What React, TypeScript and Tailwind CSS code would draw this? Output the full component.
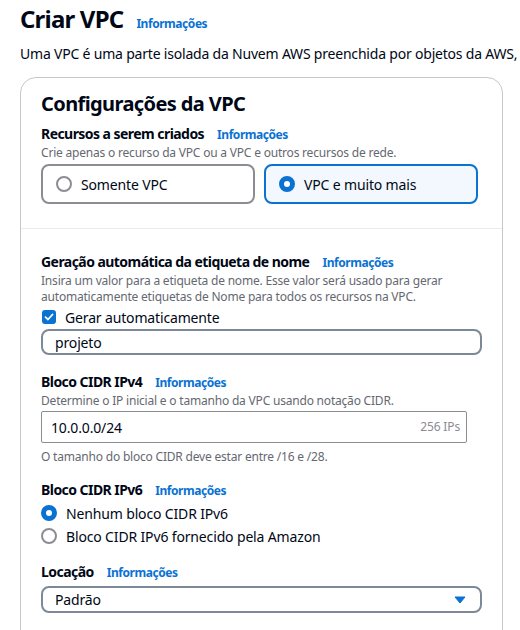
import React from "react";

function Info({ className = "" }: { className?: string }) {
  return (
    <span className={`ml-[13px] text-[12px] font-bold tracking-[-0.45px] text-[#0972d3] ${className}`}>
      Informações
    </span>
  );
}

function Radio({ checked }: { checked: boolean }) {
  return checked ? (
    <span className="w-[16px] h-[16px] rounded-full border-[5px] border-[#0972d3] bg-white shrink-0" />
  ) : (
    <span className="w-[16px] h-[16px] rounded-full border-2 border-[#8c8c94] bg-white shrink-0" />
  );
}

function Label({ text }: { text: string }) {
  return (
    <div className="flex items-baseline leading-[20px]">
      <span className="text-[14px] font-bold tracking-[-0.55px]">{text}</span>
      <Info />
    </div>
  );
}

function Hint({ children, className = "" }: { children: React.ReactNode; className?: string }) {
  return <p className={`text-[12px] tracking-[-0.2px] text-[#656871] leading-[16px] ${className}`}>{children}</p>;
}

export default function App() {
  return (
    <div className="w-[520px] h-[630px] overflow-hidden bg-white text-[#000716] text-[14px] tracking-[-0.15px] font-['Noto_Sans',sans-serif]">
      <div className="px-5 pt-[1px] flex items-baseline">
        <h1 className="text-[24px] font-bold leading-[36px] tracking-[-0.8px]">Criar VPC</h1>
        <Info />
      </div>
      <p className="px-5 mt-[7px] leading-[20px] whitespace-nowrap overflow-hidden tracking-[-0.2px]">
        Uma VPC é uma parte isolada da Nuvem AWS preenchida por objetos da AWS, como instâncias do Amazon EC2.
      </p>
      <div className="ml-5 mt-[13px] w-[483px] h-[700px] border border-[#c6c6cd] rounded-[16px]">
        <div className="px-5 pt-[12px] pb-[24px] border-b border-[#e9ebed]">
          <h2 className="text-[20px] font-bold leading-[28px] tracking-[-0.6px]">Configurações da VPC</h2>
          <div className="mt-[6px]">
            <Label text="Recursos a serem criados" />
            <Hint>Crie apenas o recurso da VPC ou a VPC e outros recursos de rede.</Hint>
          </div>
          <div className="mt-[3px] flex gap-[9px]">
            <div className="w-[214px] h-[40px] rounded-[8px] border-2 border-[#8c8c94] flex items-center pl-[13px] gap-[9px]">
              <Radio checked={false} />
              <span>Somente VPC</span>
            </div>
            <div className="w-[214px] h-[40px] rounded-[8px] border-2 border-[#0972d3] bg-[#f2f8fd] flex items-center pl-[13px] gap-[9px]">
              <Radio checked />
              <span>VPC e muito mais</span>
            </div>
          </div>
        </div>

        <div className="px-5 pt-[23px]">
          <Label text="Geração automática da etiqueta de nome" />
          <Hint>
            Insira um valor para a etiqueta de nome. Esse valor será usado para gerar
            <br />
            automaticamente etiquetas de Nome para todos os recursos na VPC.
          </Hint>
          <div className="mt-[2px] flex items-center gap-[9px] h-[20px]">
            <span className="w-[14px] h-[14px] ml-[1px] rounded-[3px] bg-[#0972d3] flex items-center justify-center">
              <svg width="10" height="10" viewBox="0 0 10 10" fill="none">
                <path d="M1.5 5.2 L4 7.5 L8.5 2.5" stroke="white" strokeWidth="1.8" strokeLinecap="round" strokeLinejoin="round" />
              </svg>
            </span>
            <span>Gerar automaticamente</span>
          </div>
          <div className="mt-[2px] h-[26px] rounded-[8px] border-2 border-[#7d8998] flex items-center px-[12px]">
            projeto
          </div>

          <div className="mt-[17px]">
            <Label text="Bloco CIDR IPv4" />
            <Hint>Determine o IP inicial e o tamanho da VPC usando notação CIDR.</Hint>
          </div>
          <div className="mt-[2px] w-[426px] h-[32px] rounded-[2px] border border-[#8c8c94] flex items-center justify-between pl-[9px] pr-[6px]">
            <span>10.0.0.0/24</span>
            <span className="text-[12px] text-[#8c8c94]">256 IPs</span>
          </div>
          <Hint className="mt-[6px]">O tamanho do bloco CIDR deve estar entre /16 e /28.</Hint>

          <div className="mt-[15px]">
            <Label text="Bloco CIDR IPv6" />
          </div>
          <div className="mt-[2px] flex flex-col gap-[3px]">
            <div className="flex items-center gap-[9px] h-[20px]">
              <Radio checked />
              <span>Nenhum bloco CIDR IPv6</span>
            </div>
            <div className="flex items-center gap-[9px] h-[20px]">
              <Radio checked={false} />
              <span>Bloco CIDR IPv6 fornecido pela Amazon</span>
            </div>
          </div>

          <div className="mt-[16px]">
            <Label text="Locação" />
          </div>
          <div className="mt-[3px] h-[27px] rounded-[8px] border-2 border-[#7d8998] flex items-center justify-between pl-[12px] pr-[14px]">
            <span>Padrão</span>
            <svg width="12" height="8" viewBox="0 0 12 8">
              <path d="M1 1 L11 1 L6 7 Z" fill="#0972d3" stroke="#0972d3" strokeWidth="1" strokeLinejoin="round" />
            </svg>
          </div>
        </div>
      </div>
    </div>
  );
}
